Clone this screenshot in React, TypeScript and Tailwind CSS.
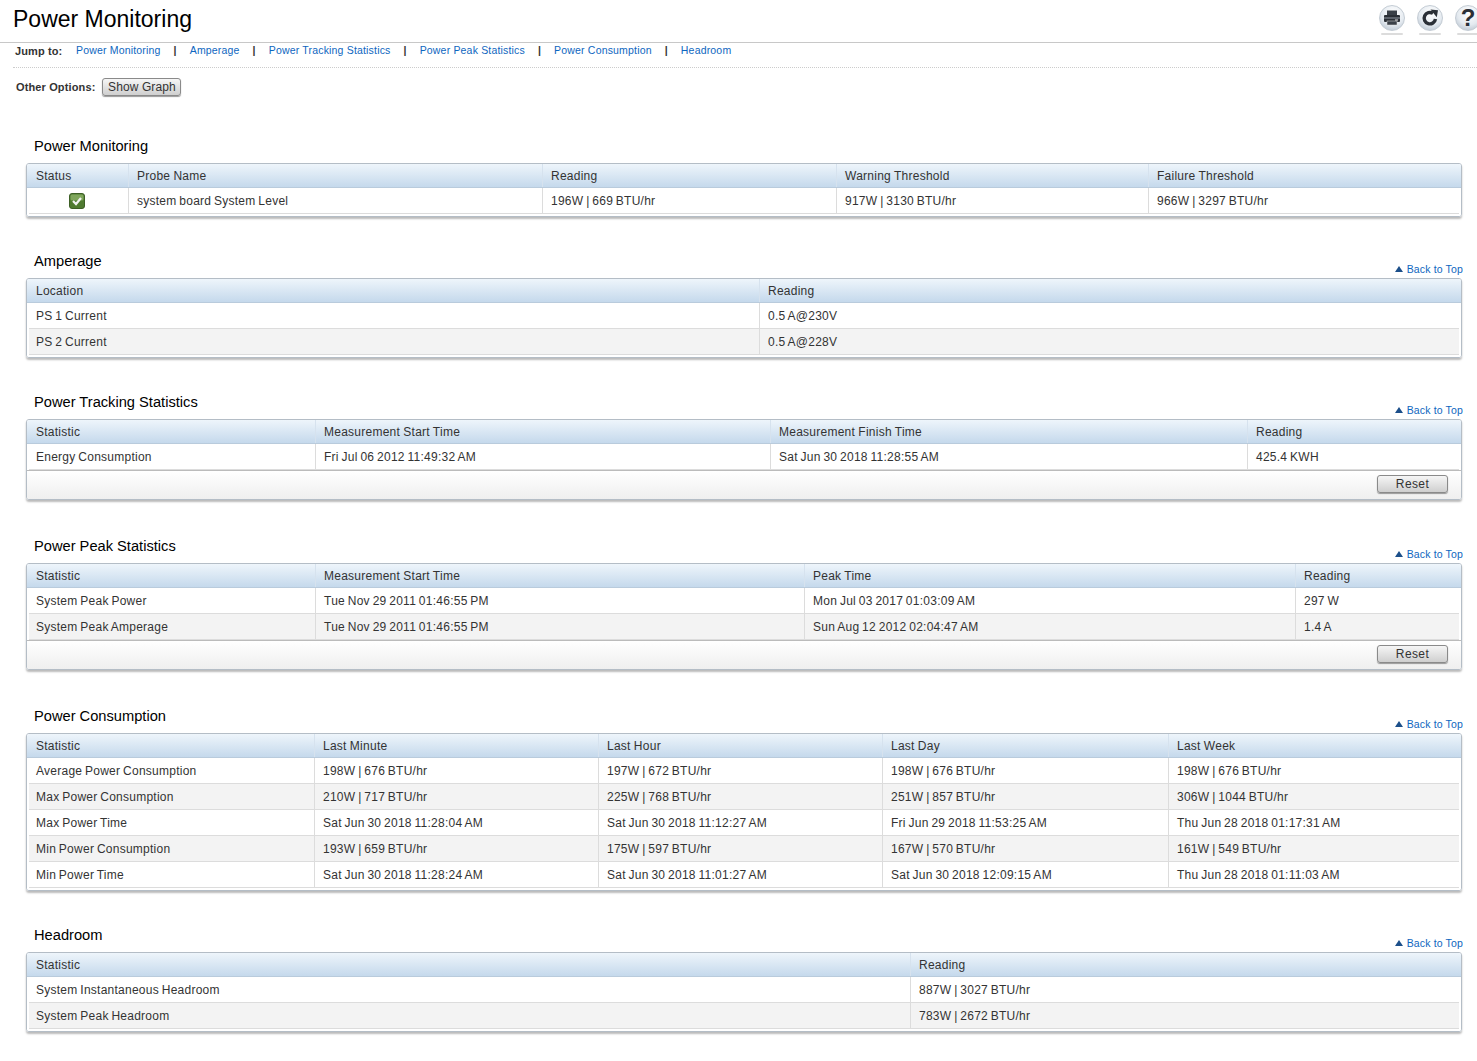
import { ReactNode } from "react";

const sections = [
  { title: "Power Monitoring", gap: "mt-0", cols: "grid-cols-[101px_414px_294px_312px_1fr]", rowCols: "grid-cols-[99px_414px_294px_312px_1fr]", back: false, reset: false,
    head: ["Status", "Probe Name", "Reading", "Warning Threshold", "Failure Threshold"],
    rows: [["__ok", "system board System Level", "196W | 669 BTU/hr", "917W | 3130 BTU/hr", "966W | 3297 BTU/hr"]] },
  { title: "Amperage", gap: "mt-[35px]", cols: "grid-cols-[732px_1fr]", rowCols: "grid-cols-[730px_1fr]", back: true, reset: false,
    head: ["Location", "Reading"],
    rows: [["PS 1 Current", "0.5 A@230V"], ["PS 2 Current", "0.5 A@228V"]] },
  { title: "Power Tracking Statistics", gap: "mt-[35px]", cols: "grid-cols-[288px_455px_477px_1fr]", rowCols: "grid-cols-[286px_455px_477px_1fr]", back: true, reset: true,
    head: ["Statistic", "Measurement Start Time", "Measurement Finish Time", "Reading"],
    rows: [["Energy Consumption", "Fri Jul 06 2012 11:49:32 AM", "Sat Jun 30 2018 11:28:55 AM", "425.4 KWH"]] },
  { title: "Power Peak Statistics", gap: "mt-[37px]", cols: "grid-cols-[288px_489px_491px_1fr]", rowCols: "grid-cols-[286px_489px_491px_1fr]", back: true, reset: true,
    head: ["Statistic", "Measurement Start Time", "Peak Time", "Reading"],
    rows: [
      ["System Peak Power", "Tue Nov 29 2011 01:46:55 PM", "Mon Jul 03 2017 01:03:09 AM", "297 W"],
      ["System Peak Amperage", "Tue Nov 29 2011 01:46:55 PM", "Sun Aug 12 2012 02:04:47 AM", "1.4 A"],
    ] },
  { title: "Power Consumption", gap: "mt-[37px]", cols: "grid-cols-[287px_284px_284px_286px_1fr]", rowCols: "grid-cols-[285px_284px_284px_286px_1fr]", back: true, reset: false,
    head: ["Statistic", "Last Minute", "Last Hour", "Last Day", "Last Week"],
    rows: [
      ["Average Power Consumption", "198W | 676 BTU/hr", "197W | 672 BTU/hr", "198W | 676 BTU/hr", "198W | 676 BTU/hr"],
      ["Max Power Consumption", "210W | 717 BTU/hr", "225W | 768 BTU/hr", "251W | 857 BTU/hr", "306W | 1044 BTU/hr"],
      ["Max Power Time", "Sat Jun 30 2018 11:28:04 AM", "Sat Jun 30 2018 11:12:27 AM", "Fri Jun 29 2018 11:53:25 AM", "Thu Jun 28 2018 01:17:31 AM"],
      ["Min Power Consumption", "193W | 659 BTU/hr", "175W | 597 BTU/hr", "167W | 570 BTU/hr", "161W | 549 BTU/hr"],
      ["Min Power Time", "Sat Jun 30 2018 11:28:24 AM", "Sat Jun 30 2018 11:01:27 AM", "Sat Jun 30 2018 12:09:15 AM", "Thu Jun 28 2018 01:11:03 AM"],
    ] },
  { title: "Headroom", gap: "mt-[35px]", cols: "grid-cols-[883px_1fr]", rowCols: "grid-cols-[881px_1fr]", back: true, reset: false,
    head: ["Statistic", "Reading"],
    rows: [["System Instantaneous Headroom", "887W | 3027 BTU/hr"], ["System Peak Headroom", "783W | 2672 BTU/hr"]] },
];

const links = ["Power Monitoring", "Amperage", "Power Tracking Statistics", "Power Peak Statistics", "Power Consumption", "Headroom"];

const RoundIcon = ({ children }: { children: ReactNode }) => (
  <div className="flex flex-col items-center">
    <div className="flex h-[26px] w-[26px] items-center justify-center rounded-full border border-[#c4ccd4] bg-[radial-gradient(circle_at_55%_30%,#ffffff,#e4eaf0_55%,#a9b6c4)]">
      {children}
    </div>
    <div className="mt-[2px] h-[2px] w-[22px] rounded-full bg-[#dcdcdc]" />
  </div>
);

const OkIcon = () => (
  <svg width="16" height="16" viewBox="0 0 16 16">
    <rect x="0.5" y="0.5" width="15" height="15" rx="2.5" fill="#4f7a30" stroke="#3d5f26" />
    <rect x="1.5" y="1.5" width="13" height="6" rx="1.5" fill="#7fa65c" />
    <path d="M4 8l3 3 5-6" fill="none" stroke="#f2f2f2" strokeWidth="2.2" />
  </svg>
);

const Btn = ({ children }: { children: ReactNode }) => (
  <button className="h-[18px] w-[71px] rounded-[3px] border border-[#8a8a8a] bg-gradient-to-b from-[#f6f6f6] to-[#cfcfcf] text-[12px] leading-[16px] tracking-[0.4px] text-[#333] shadow-[0_1px_1px_#999]">
    {children}
  </button>
);

const Section = ({ s }: { s: (typeof sections)[number] }) => (
  <section className={s.gap}>
    <div className="ml-[34px] mr-[14px] flex items-end justify-between">
      <h2 className="text-[14.67px] leading-[18px] text-black">{s.title}</h2>
      {s.back && (
        <a className="-mb-[5px] flex items-center gap-[4px] text-[10.5px] leading-[12px] tracking-[0.15px] text-[#0e66c0]">
          <span className="h-0 w-0 border-x-[4px] border-b-[6px] border-x-transparent border-b-[#1c4f8a]" />
          Back to Top
        </a>
      )}
    </div>
    <div className="ml-[26px] mr-[15px] mt-[8px] overflow-hidden rounded-[3px] border border-[#b4bdc6] shadow-[0_2px_2px_#bbb]">
      <div className={`grid h-[24px] items-center border-b border-[#b9cbdc] bg-gradient-to-b from-[#eef5fb] to-[#c5d9ec] text-[12px] tracking-[0.25px] [word-spacing:-0.4px] text-[#333] ${s.cols}`}>
        {s.head.map((h, i) => (
          <div key={h} className={`flex h-full items-center ${i > 0 ? "border-l border-[#d6e2ee] pl-[8px]" : "pl-[9px]"}`}>{h}</div>
        ))}
      </div>
      <div className="bg-white px-[2px] pb-[2px]">
        {s.rows.map((r, ri) => (
          <div key={ri} className={`grid h-[26px] items-center border-b border-[#dcdcdc] text-[12px] tracking-[0.25px] [word-spacing:-0.8px] text-[#333] ${s.rowCols} ${ri % 2 ? "bg-[#f3f3f3]" : "bg-white"}`}>
            {r.map((c, i) => (
              <div key={i} className={`flex h-full items-center ${i > 0 ? "border-l border-[#dcdcdc] pl-[8px]" : c === "__ok" ? "justify-center pr-[4px]" : "pl-[7px]"}`}>
                {c === "__ok" ? <OkIcon /> : c}
              </div>
            ))}
          </div>
        ))}
      </div>
      {s.reset && (
        <div className="-mt-[2px] flex h-[29px] items-center justify-end border-t border-[#bbb] bg-gradient-to-b from-white to-[#efefef] pb-[2px] pr-[13px]">
          <Btn>Reset</Btn>
        </div>
      )}
    </div>
  </section>
);

export default function App() {
  return (
    <div className="min-h-[1061px] bg-white font-['Liberation_Sans',Arial,sans-serif] text-[#333]">
      <header className="flex h-[43px] items-start justify-between border-b border-[#c8c8c8] pl-[13px]">
        <h1 className="mt-[5px] text-[23px] leading-[28px] text-black">Power Monitoring</h1>
        <div className="mt-[5px] flex w-[98px] shrink-0 gap-[12px] overflow-hidden">
          <RoundIcon>
            <svg width="18" height="16" viewBox="0 0 18 16">
              <rect x="4" y="0.5" width="10" height="5" fill="#3a4048" />
              <rect x="1" y="5" width="16" height="7" rx="1" fill="#2a2f36" />
              <rect x="1" y="7.5" width="16" height="1" fill="#8f98a2" />
              <rect x="4" y="11" width="10" height="4" fill="#3a4048" stroke="#ddd" strokeWidth="0.5" />
              <rect x="12" y="9.5" width="3" height="1" fill="#ddd" />
            </svg>
          </RoundIcon>
          <RoundIcon>
            <svg width="20" height="20" viewBox="0 0 20 20">
              <path d="M15.5 11a5.7 5.7 0 1 1-2.5-5.6" fill="none" stroke="#2a2f36" strokeWidth="3.4" />
              <path d="M10.5 1.5l7.5.7-1.2 7z" fill="#2a2f36" />
            </svg>
          </RoundIcon>
          <RoundIcon>
            <span className="text-[24px] font-bold leading-none text-[#2a2f36]">?</span>
          </RoundIcon>
        </div>
      </header>
      <nav className="ml-[13px] flex h-[25px] items-start border-b border-dotted border-[#ccc] text-[10.5px] tracking-[0.18px]">
        <span className="ml-[2px] w-[61px] text-[11px] font-bold tracking-[0.1px] text-[#333]">Jump to:</span>
        {links.map((l, i) => (
          <span key={l} className="flex items-center">
            {i > 0 && <span className="mx-[13px] font-bold text-[#333]">|</span>}
            <a className="text-[#0e66c0]">{l}</a>
          </span>
        ))}
      </nav>
      <div className="ml-[16px] mt-[10px] flex items-center gap-[7px]">
        <span className="text-[11px] font-bold tracking-[0.13px] text-[#333]">Other Options:</span>
        <button className="h-[18px] w-[79px] rounded-[3px] border border-[#8a8a8a] bg-gradient-to-b from-[#f6f6f6] to-[#cfcfcf] text-[12px] leading-[16px] tracking-[0.1px] text-[#333] shadow-[0_1px_1px_#999]">
          Show Graph
        </button>
      </div>
      <main className="pt-[41px]">
        {sections.map((s) => (
          <Section key={s.title} s={s} />
        ))}
      </main>
    </div>
  );
}
